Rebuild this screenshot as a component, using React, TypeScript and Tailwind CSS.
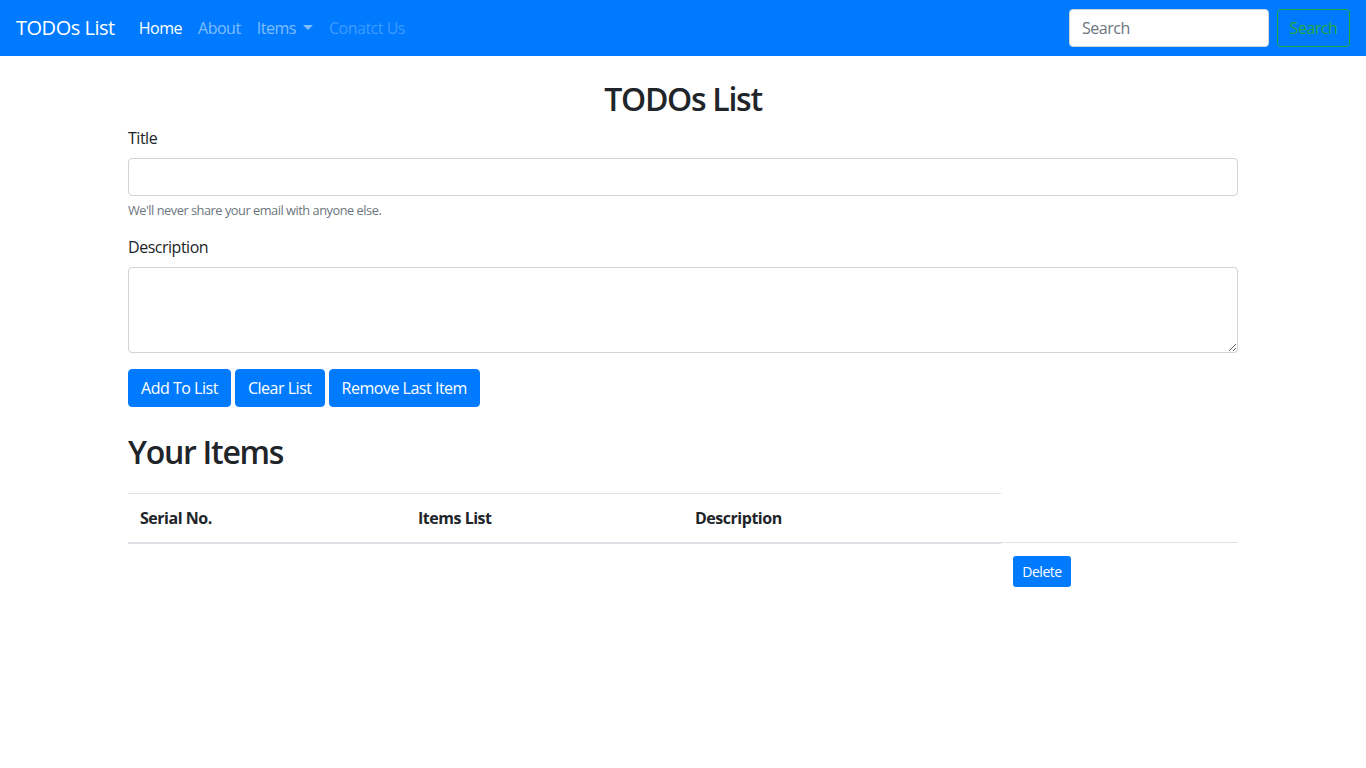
import React from "react";

const font = { fontFamily: '"Segoe UI", "Open Sans", "Noto Sans", Arial, sans-serif' };

export default function App() {
  return (
    <div className="min-h-[768px] bg-white text-[#212529] text-[16px] leading-[1.5] tracking-[-0.03em]" style={font}>
      <nav className="h-[56px] bg-[#007bff] flex items-center px-4">
        <a className="text-white text-[20px] leading-[30px] mr-4">TODOs List</a>
        <ul className="flex items-center">
          <li><a className="px-2 text-white">Home</a></li>
          <li><a className="px-2 text-white/50">About</a></li>
          <li>
            <a className="px-2 text-white/50 inline-flex items-center">
              Items
              <span className="ml-[7px] mb-[2px] inline-block w-0 h-0 border-l-[5px] border-r-[5px] border-t-[5px] border-l-transparent border-r-transparent border-t-white/50" />
            </a>
          </li>
          <li><a className="px-2 text-white/25">Conatct Us</a></li>
        </ul>
        <form className="ml-auto flex items-center gap-2">
          <input
            className="w-[200px] h-[38px] bg-white border border-[#ced4da] rounded-[4px] px-3 text-[16px] text-[#495057] placeholder-[#6c757d] outline-none"
            placeholder="Search"
          />
          <button type="button" className="w-[73px] h-[38px] border border-[#28a745] rounded-[4px] text-[#28a745] text-[16px]">
            Search
          </button>
        </form>
      </nav>

      <div className="max-w-[1140px] mx-auto px-[15px]">
        <h2 className="mt-6 mb-2 text-center text-[32px] leading-[1.2] font-semibold tracking-[-0.04em]">TODOs List</h2>
        <div className="mb-[14px]">
          <label className="block mb-2">Title</label>
          <input className="block w-full h-[38px] border border-[#ced4da] rounded-[4px] px-3 outline-none" />
          <small className="block mt-[5px] text-[12.8px] leading-[1.5] text-[#6c757d]">We'll never share your email with anyone else.</small>
        </div>
        <div className="mb-4">
          <label className="block mb-2">Description</label>
          <textarea rows={3} className="block w-full h-[86px] border border-[#ced4da] rounded-[4px] px-3 py-[6px] outline-none" />
        </div>
        <div className="flex gap-1">
          <button type="button" className="h-[38px] px-3 bg-[#007bff] text-white rounded-[4px] border border-[#007bff]">Add To List</button>
          <button type="button" className="h-[38px] px-3 bg-[#007bff] text-white rounded-[4px] border border-[#007bff]">Clear List</button>
          <button type="button" className="h-[38px] px-3 bg-[#007bff] text-white rounded-[4px] border border-[#007bff]">Remove Last Item</button>
        </div>

        <h2 className="mt-[26px] mb-[22px] text-[32px] leading-[1.2] font-semibold tracking-[-0.04em]">Your Items</h2>

        <table className="w-full table-fixed border-collapse">
          <colgroup>
            <col className="w-[278px]" />
            <col className="w-[277px]" />
            <col className="w-[318px]" />
            <col className="w-[237px]" />
          </colgroup>
          <thead>
            <tr>
              <th className="p-3 text-left font-bold border-t border-b-2 border-[#dee2e6]">Serial No.</th>
              <th className="p-3 text-left font-bold border-t border-b-2 border-[#dee2e6]">Items List</th>
              <th className="p-3 text-left font-bold border-t border-b-2 border-[#dee2e6]">Description</th>
            </tr>
          </thead>
          <tbody>
            <tr>
              <td className="p-3 border-t border-[#dee2e6]"></td>
              <td className="p-3 border-t border-[#dee2e6]"></td>
              <td className="p-3 border-t border-[#dee2e6]"></td>
              <td className="pt-[13px] px-3 pb-3 border-t border-[#dee2e6] align-top">
                <button type="button" className="w-[58px] h-[31px] bg-[#007bff] text-white text-[14px] rounded-[3px]">Delete</button>
              </td>
            </tr>
          </tbody>
        </table>
      </div>
    </div>
  );
}
